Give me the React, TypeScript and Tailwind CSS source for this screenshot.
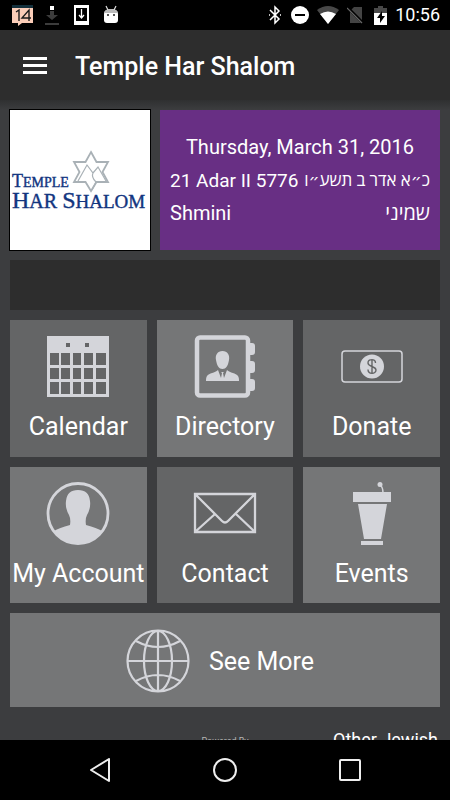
import type { ReactNode } from 'react';

function StatusBar() {
  return (
    <div className="flex h-[30px] shrink-0 items-center justify-between bg-black pr-[10px] pl-3">
      <div className="flex items-center gap-3">
        <svg className="h-[24px] w-[21px]" viewBox="0 0 21 24">
          <path d="M0 2h21v18h-11l-4 3v-3H0z" fill="#fbcdb8" />
          <path d="M0 2h21v3H0z" fill="#14303c" />
          <path d="M4 9l3-2v11M17 18V7l-7 8h9" fill="none" stroke="#1b1b1b" strokeWidth="1.4" />
        </svg>
        <svg className="h-[22px] w-[14px]" viewBox="0 0 14 22">
          <path d="M5 2h4v4H5z" fill="#fff" />
          <path d="M5 7h4v4h4l-6 5-6-5h4zM0 19h14v2H0z" fill="#3c3c3c" />
        </svg>
        <svg className="ml-[3px] h-[20px] w-[15px]" viewBox="0 0 15 20">
          <path d="M0 0h15v20H0z" fill="#fff" />
          <path d="M2 3h11v13H2z" fill="#000" />
          <path d="M7.500 4v8M5 10l2.500 3 2.500-3" fill="none" stroke="#fff" strokeWidth="1.3" />
        </svg>
        <svg className="ml-[2px] h-[20px] w-[16px]" viewBox="0 0 16 20">
          <path d="M3 1l2 4M13 1l-2 4" stroke="#ddd" strokeWidth="1.2" />
          <path d="M1 9q0-5 7-5t7 5v6q0 3-3 3H4q-3 0-3-3z" fill="#fff" />
          <path d="M1 8q1-4 7-4t7 4z" fill="#bbb" />
          <path d="M4 9h2v2H4zM10 9h2v2h-2z" fill="#555" />
        </svg>
      </div>
      <div className="flex items-center gap-[10px]">
        <svg className="h-[20px] w-[12px]" viewBox="0 0 12 20">
          <path d="M1 5l9 9-4 4V2l4 4-9 9M0 10h1M11 10h1" fill="none" stroke="#fff" strokeWidth="1.5" />
        </svg>
        <svg className="h-[18px] w-[18px]" viewBox="0 0 18 18">
          <circle cx="9" cy="9" r="9" fill="#fff" />
          <path d="M4 8h10v2H4z" fill="#000" />
        </svg>
        <svg className="-ml-[2px] h-[18px] w-[22px]" viewBox="0 0 22 18">
          <path d="M0 4q11-8 22 0L11 18z" fill="#484848" />
          <path d="M3 8q8-5 16 0l-8 10z" fill="#fff" />
        </svg>
        <svg className="-ml-[2px] h-[18px] w-[17px]" viewBox="0 0 17 18">
          <path d="M7 1h8v16H3V5z" fill="#444" />
          <path d="M0 1l16 16" stroke="#000" strokeWidth="3" />
          <path d="M0 2l15 15" stroke="#666" strokeWidth="1.2" />
        </svg>
        <svg className="h-[19px] w-[13px]" viewBox="0 0 13 19">
          <path d="M4 0h5v2h4v5H0V2h4z" fill="#484848" />
          <path d="M0 7h13v12H0z" fill="#fff" />
          <path d="M8 5L3 12h3v5l5-7H8z" fill="#000" />
        </svg>
        <time className="-ml-[2px] text-[18px] leading-[22px] text-white">10:56</time>
      </div>
    </div>
  );
}

function TempleLogo() {
  return (
    <svg className="h-full w-full" viewBox="10 110 140 140" fontFamily='"Liberation Serif", serif'>
      <g fill="none" stroke="#a9b1b6" strokeWidth="1.8">
        <path d="M91 152l5.500 10H108l-5.500 10 5.500 10H96.500L91 191l-5.500-9H74l5.500-10-5.500-10h11.500z" />
        <path d="M78 181l9-16 6 8 5-6 8 14M93 173q-2 4 3 9l-4 8" strokeWidth="1.2" />
      </g>
      <g fill="#12357f" stroke="#12357f" strokeWidth="0.400">
        <text x="12" y="187" fontSize="18">T<tspan fontSize="14">EMPLE</tspan></text>
        <text x="12" y="208" fontSize="24">H<tspan fontSize="20">AR </tspan>S<tspan fontSize="19">HALOM</tspan></text>
      </g>
    </svg>
  );
}

function Icon({ children }: { children: ReactNode }) {
  return (
    <svg className="h-[64px] w-[64px] shrink-0" viewBox="0 0 64 64" fill="#d4d5da" aria-hidden="true">
      {children}
    </svg>
  );
}

const calendarIcon = (
  <Icon>
    <path
      fillRule="evenodd"
      d="M1 2h62v61H1zM20 9v4h4V9zM39 9v4h4V9zM4 19v12h9V19zM15 19v12h9V19zM27 19v12h8V19zM38 19v12h9V19zM50 19v12h10V19zM4 34v11h9V34zM15 34v11h9V34zM27 34v11h8V34zM38 34v11h9V34zM50 34v11h10V34zM4 48v12h9V48zM15 48v12h9V48zM27 48v12h8V48zM38 48v12h9V48zM50 48v12h10V48z"
    />
  </Icon>
);

const directoryIcon = (
  <Icon>
    <rect x="4" y="3.500" width="51" height="58" rx="3" fill="none" stroke="#d4d5da" strokeWidth="4.500" />
    <path d="M56 9h3q3 0 3 3v6q0 3-3 3h-3zM56 27h3q3 0 3 3v6q0 3-3 3h-3zM56 45h3q3 0 3 3v6q0 3-3 3h-3z" />
    <path d="M29.500 17c5 0 7.500 4 6.500 9-1 6-3 9-6.500 9s-5.500-3-6.500-9c-1-5 1.500-9 6.500-9z" />
    <path d="M25 36l3 8 1-5-1-1h3l-1 1 1 5 3-8c3 3 9 3 11 6 1 2 1 3 1 5H13c0-2 0-3 1-5 2-3 8-3 11-6z" />
  </Icon>
);

const donateIcon = (
  <Icon>
    <rect x="2" y="17" width="60" height="31" rx="3" fill="none" stroke="#d4d5da" strokeWidth="1.500" />
    <circle cx="32" cy="32.500" r="12" />
    <path
      d="M35.500 29c0-4.500-7.500-4.500-7.500 0 0 4 8 3 8 7 0 4.500-8 4.500-8-.5M32 25v15"
      fill="none"
      stroke="#656667"
      strokeWidth="1.400"
    />
  </Icon>
);

const accountIcon = (
  <Icon>
    <circle cx="32" cy="32.500" r="30" fill="none" stroke="#d4d5da" strokeWidth="2.800" />
    <path d="M8 50q5-3 16-6 1-6-1-10-4-7-3-14 1-11 12-11t12 11q1 7-3 14-2 4-1 10 11 3 16 6-8 13-24 13T8 50z" />
  </Icon>
);

const contactIcon = (
  <Icon>
    <path
      d="M2 13h60v38H2zM2 13l27 27q3 3 6 0l27-27M2 51l20-18M62 51L43 33"
      fill="none"
      stroke="#d4d5da"
      strokeWidth="2.300"
    />
  </Icon>
);

const eventsIcon = (
  <Icon>
    <path d="M13 11h38v10H13zM18 23h29l-6 35H24zM21 60h22v4H21z" />
    <path d="M40 4q3 2 3 8" fill="none" stroke="#d4d5da" strokeWidth="1.500" />
    <circle cx="40" cy="3.500" r="2.500" />
  </Icon>
);

const globeIcon = (
  <Icon>
    <g fill="none" stroke="#d4d5da" strokeWidth="2.200">
      <circle cx="32" cy="32" r="30.500" />
      <ellipse cx="32" cy="32" rx="14" ry="30" />
      <path d="M32 1v62M1 32h62M10 12q22 12 44 0M10 52q22-12 44 0" />
    </g>
  </Icon>
);

const tiles = [
  { label: 'Calendar', icon: calendarIcon, light: false },
  { label: 'Directory', icon: directoryIcon, light: true },
  { label: 'Donate', icon: donateIcon, light: false },
  { label: 'My Account', icon: accountIcon, light: true },
  { label: 'Contact', icon: contactIcon, light: false },
  { label: 'Events', icon: eventsIcon, light: true },
];

export default function App() {
  return (
    <div className="flex h-screen flex-col overflow-hidden bg-[#3c3d3f] font-['Roboto','Open_Sans','DejaVu_Sans',sans-serif] text-white">
      <StatusBar />
      <header className="flex h-[70px] shrink-0 items-center gap-7 bg-[#2d2d2d] px-[23px]">
        <button type="button" aria-label="Menu" className="flex w-6 flex-col gap-[4px]">
          <span className="h-[3px] bg-white" />
          <span className="h-[3px] bg-white" />
          <span className="h-[3px] bg-white" />
        </button>
        <h1 className="pt-[3px] text-[25px] leading-[30px] font-medium">Temple Har Shalom</h1>
      </header>

      <main className="flex min-h-0 flex-1 flex-col gap-[10px] overflow-hidden bg-linear-to-b from-[#2f3031] to-[#3c3d3f] to-[10px] p-[10px]">
        <section className="flex shrink-0 gap-[10px]">
          <div className="h-[140px] w-[140px] shrink-0 bg-white outline outline-black">
            <TempleLogo />
          </div>
          <div className="flex min-w-0 flex-1 flex-col justify-center bg-[#682f84] px-[10px] text-[20px] leading-[33px] whitespace-nowrap">
            <p className="text-center">Thursday, March 31, 2016</p>
            <p className="flex justify-between text-[19px]">
              <span>21 Adar II 5776</span>
              <span dir="rtl" lang="he" className="text-[17px]">כ״א אדר ב תשע״ו</span>
            </p>
            <p className="flex justify-between">
              <span>Shmini</span>
              <span dir="rtl" lang="he">שמיני</span>
            </p>
          </div>
        </section>

        <div className="h-[50px] shrink-0 bg-[#2d2d2d]" />

        <nav className="grid shrink-0 grid-cols-3 gap-[10px] text-[25px] leading-[32px] [text-shadow:1px_1px_2px_#0006]">
          {tiles.map((tile) => (
            <button
              key={tile.label}
              type="button"
              className={`flex aspect-square flex-col items-center gap-[13px] pt-[14px] whitespace-nowrap ${
                tile.light ? 'bg-[#757677]' : 'bg-[#646566]'
              }`}
            >
              {tile.icon}
              <span>{tile.label}</span>
            </button>
          ))}
          <button type="button" className="col-span-3 flex h-[94px] items-center justify-center gap-[19px] bg-[#757677] pt-[2px] pr-[10px]">
            {globeIcon}
            <span className="pt-[2px]">See More</span>
          </button>
        </nav>

        <footer className="grid shrink-0 grid-cols-3 pt-3">
          <span className="col-start-2 pt-[6px] text-center text-[9px] leading-[12px] text-[#b5b5b5]">Powered By</span>
          <a href="#other" className="pr-[2px] text-right text-[18px] leading-[22px] whitespace-nowrap">
            Other Jewish
          </a>
        </footer>
      </main>

      <nav className="flex h-[60px] shrink-0 items-center justify-center gap-[101px] bg-black">
        <button type="button" aria-label="Back">
          <svg className="h-6 w-6" viewBox="0 0 24 24" fill="none" stroke="#eee" strokeWidth="2" strokeLinejoin="round">
            <path d="M21 1v22L3 12z" />
          </svg>
        </button>
        <button type="button" aria-label="Home">
          <svg className="h-6 w-6" viewBox="0 0 24 24" fill="none" stroke="#eee" strokeWidth="2">
            <circle cx="12" cy="12" r="11" />
          </svg>
        </button>
        <button type="button" aria-label="Recent apps">
          <svg className="h-6 w-6" viewBox="0 0 24 24" fill="none" stroke="#eee" strokeWidth="2">
            <rect x="2" y="2" width="20" height="20" rx="1" />
          </svg>
        </button>
      </nav>
    </div>
  );
}
